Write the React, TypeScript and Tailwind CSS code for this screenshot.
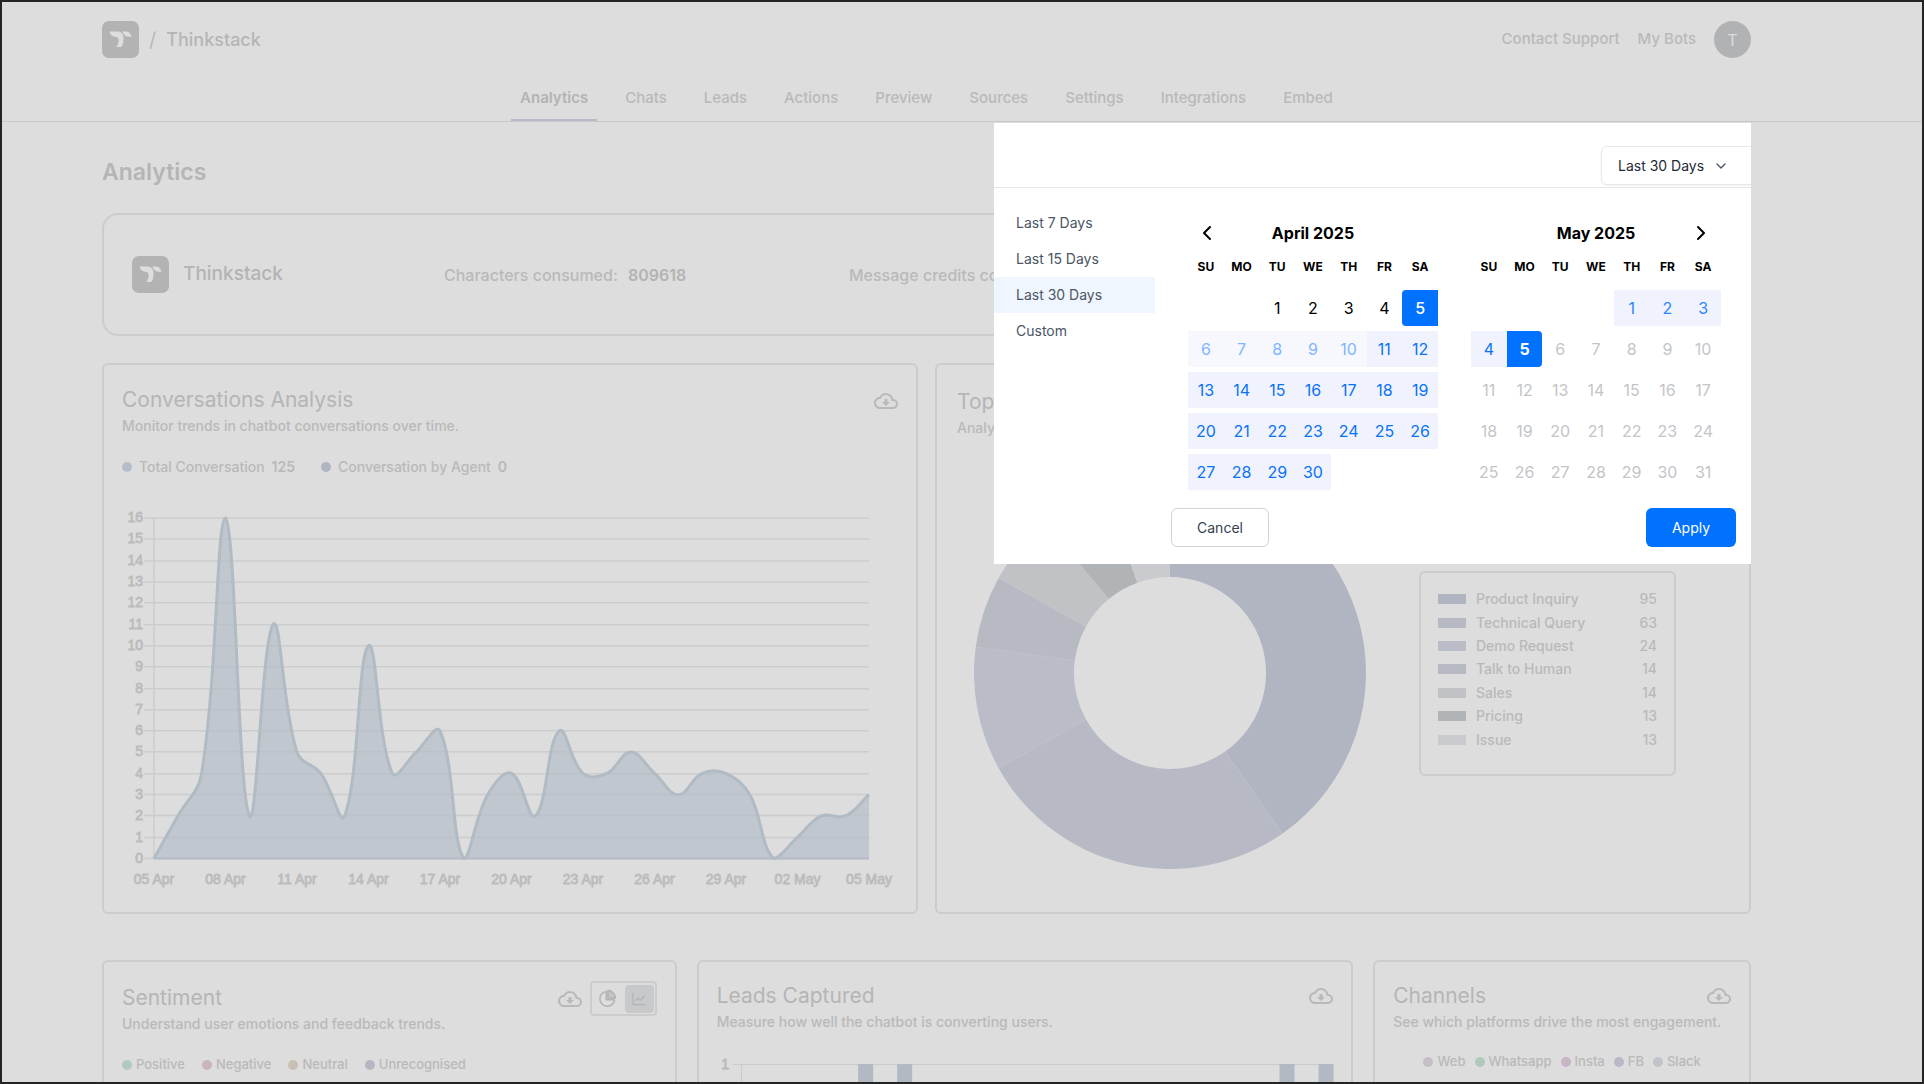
import React from "react";
import { MdOutlineCloudDownload } from "react-icons/md";
import { AiOutlineLineChart } from "react-icons/ai";
import { ChevronDown, ChevronLeft, ChevronRight } from "lucide-react";

const NAV = ["Analytics", "Chats", "Leads", "Actions", "Preview", "Sources", "Settings", "Integrations", "Embed"];
const WEEKDAYS = ["SU", "MO", "TU", "WE", "TH", "FR", "SA"];
const PRESETS = ["Last 7 Days", "Last 15 Days", "Last 30 Days", "Custom"];
const DAILY = [0, 2, 4, 16, 2, 11, 5, 4, 2, 10, 4, 5, 6, 0, 3, 4, 2, 6, 4, 4, 5, 4, 3, 4, 4, 3, 0, 1, 2, 2, 3];
const DATE_LABELS = ["05 Apr", "08 Apr", "11 Apr", "14 Apr", "17 Apr", "20 Apr", "23 Apr", "26 Apr", "29 Apr", "02 May", "05 May"];
const TOPICS = [
  { name: "Product Inquiry", count: 95, color: "#b1b5c1" },
  { name: "Technical Query", count: 63, color: "#b7bac4" },
  { name: "Demo Request", count: 24, color: "#babdc7" },
  { name: "Talk to Human", count: 14, color: "#b7bac2" },
  { name: "Sales", count: 14, color: "#c1c2c6" },
  { name: "Pricing", count: 13, color: "#b0b4b7" },
  { name: "Issue", count: 13, color: "#cacbcf" },
];

function LogoMark() {
  return (
    <svg viewBox="0 0 37 37" className="size-[37px] shrink-0" aria-hidden="true">
      <rect width="37" height="37" rx="7" fill="#b3b3b3" />
      <path
        d="M7.500 10.500H15C19.500 10.500 21.500 13 21.500 17C21.500 20.200 21 23.200 20 25.200Q19.500 26 18.500 26H14.300C16.200 23.500 17 20.500 16.500 18.500C16.200 16.600 15 15.700 13 15.700C10 15.700 8.300 13.500 7.500 10.500Z"
        fill="#dddddd"
      />
      <path d="M20.300 10.500h3.500c2.700 0 4.700 1.700 5.900 5.200h-3.200c-2.900 0-4.900-1.800-6.200-5.200z" fill="#dddddd" />
    </svg>
  );
}

function DownloadButton() {
  return (
    <button type="button" aria-label="Download" className="shrink-0 text-[#b9b9b9]">
      <MdOutlineCloudDownload className="size-6" />
    </button>
  );
}

function CardHeader({ title, subtitle, children }: { title: string; subtitle: string; children?: React.ReactNode }) {
  return (
    <div className="flex items-start justify-between">
      <div className="min-w-0">
        <h2 className="text-[21px] leading-7 font-normal whitespace-nowrap text-[#b5b5b5]">{title}</h2>
        <p className="text-sm leading-6 font-medium whitespace-nowrap text-[#b9b9b9]">{subtitle}</p>
      </div>
      {children}
    </div>
  );
}

function Dot({ className }: { className: string }) {
  return <span className={`size-[10px] shrink-0 rounded-full ${className}`} />;
}

type Point = { x: number; y: number };

const LEFT = 32;
const RIGHT = 748;
const TOP = 12;
const BOTTOM = 353;
const STEP = (BOTTOM - TOP) / 16;

function curve(points: Point[]) {
  const tension = 0.4;
  const clamp = (p: Point) => ({ x: Math.min(RIGHT, Math.max(LEFT, p.x)), y: Math.min(BOTTOM, Math.max(TOP, p.y)) });
  const handles = points.map((cur, i) => {
    const prev = points[i - 1] ?? cur;
    const next = points[i + 1] ?? cur;
    const a = Math.hypot(cur.x - prev.x, cur.y - prev.y);
    const b = Math.hypot(next.x - cur.x, next.y - cur.y);
    const fa = (tension * a) / (a + b);
    const fb = (tension * b) / (a + b);
    return {
      before: clamp({ x: cur.x - fa * (next.x - prev.x), y: cur.y - fa * (next.y - prev.y) }),
      after: clamp({ x: cur.x + fb * (next.x - prev.x), y: cur.y + fb * (next.y - prev.y) }),
    };
  });
  return points
    .map((p, i) => {
      if (i === 0) return `M${p.x} ${p.y}`;
      const c1 = handles[i - 1].after;
      const c2 = handles[i].before;
      return `C${c1.x} ${c1.y} ${c2.x} ${c2.y} ${p.x} ${p.y}`;
    })
    .join("");
}

function ConversationChart() {
  const points = DAILY.map((v, i) => ({ x: LEFT + ((RIGHT - LEFT) * i) / 30, y: BOTTOM - v * STEP }));
  const line = curve(points);
  return (
    <svg viewBox="0 0 777 390" className="mt-[29px] w-full" role="img" aria-label="Conversations per day">
      {Array.from({ length: 17 }, (_, v) => {
        const y = Math.round(BOTTOM - v * STEP);
        return (
          <g key={v}>
            <path d={`M${LEFT - 10} ${y}H${RIGHT}`} stroke="#cccccc" strokeWidth="1.5" />
            <text x={LEFT - 11} y={y + 4} textAnchor="end" fontSize="14" fontFamily="Liberation Sans, sans-serif" fill="#bcbcbc" stroke="#bcbcbc" strokeWidth="0.8">
              {v}
            </text>
          </g>
        );
      })}
      <path d={`M${LEFT} ${TOP}V${BOTTOM}`} stroke="#cccccc" strokeWidth="1.5" />
      <path d={`${line}V${BOTTOM}H${LEFT}Z`} fill="#b4bec8" fillOpacity="0.72" />
      <path d={`M${LEFT} ${BOTTOM}H${RIGHT}`} stroke="#b4bbc5" strokeWidth="2" />
      <path d={line} fill="none" stroke="#b1bbc4" strokeWidth="3" />
      {DATE_LABELS.map((label, i) => (
        <text key={label} x={LEFT + ((RIGHT - LEFT) * i) / 10} y="379" textAnchor="middle" fontSize="14" fontFamily="Liberation Sans, sans-serif" fill="#bcbcbc" stroke="#bcbcbc" strokeWidth="0.8">
          {label}
        </text>
      ))}
    </svg>
  );
}

function TopicsDonut() {
  const total = TOPICS.reduce((sum, t) => sum + t.count, 0);
  const at = (r: number, turn: number) => {
    const a = turn * 2 * Math.PI;
    return `${196 + r * Math.sin(a)} ${196 - r * Math.cos(a)}`;
  };
  let start = 0;
  return (
    <svg viewBox="0 0 392 392" className="w-[392px] shrink-0" role="img" aria-label="Topics share">
      {TOPICS.map((t) => {
        const from = start / total;
        start += t.count;
        const to = start / total;
        return <path key={t.name} fill={t.color} d={`M${at(196, from)}A196 196 0 0 1 ${at(196, to)}L${at(96, to)}A96 96 0 0 0 ${at(96, from)}Z`} />;
      })}
    </svg>
  );
}

function dayClass(month: string, day: number) {
  if (month === "April 2025") {
    if (day < 5) return "text-black";
    if (day === 5) return "rounded-l-[4px] bg-[#0072ff] font-medium text-white";
    if (day <= 10) return "bg-[#f7f8fe] text-[#80b5ff]";
    return "bg-[#f0f3fe] text-[#0a72f5]";
  }
  if (day < 4) return "bg-[#f0f3fe] text-[#2f86fa]";
  if (day === 4) return "bg-[#f0f3fe] text-[#0a72f5]";
  if (day === 5) return "rounded-r-[4px] bg-[#0072ff] font-bold text-white";
  return "text-[#c3c5c8]";
}

function Month({ title, offset, days, nav }: { title: string; offset: number; days: number; nav: "prev" | "next" }) {
  const cells = [...Array(offset).fill(0), ...Array.from({ length: days }, (_, i) => i + 1)];
  while (cells.length < 35) cells.push(0);
  return (
    <div className="w-[250px]">
      <div className="grid h-9 grid-cols-7 items-center">
        {nav === "prev" && (
          <button type="button" aria-label="Previous month" className="col-start-1 row-start-1 flex justify-center pl-0.5">
            <ChevronLeft className="size-6 text-black" />
          </button>
        )}
        <h3 className="col-span-5 col-start-2 row-start-1 text-center text-base font-bold text-black">{title}</h3>
        {nav === "next" && (
          <button type="button" aria-label="Next month" className="col-start-7 row-start-1 flex justify-center pr-1">
            <ChevronRight className="size-6 text-black" />
          </button>
        )}
      </div>
      <table className="w-full table-fixed border-collapse">
        <thead>
          <tr className="h-[34px]">
            {WEEKDAYS.map((d) => (
              <th key={d} className="p-0 pb-[3px] text-center text-xs font-bold text-black">
                {d}
              </th>
            ))}
          </tr>
        </thead>
        <tbody>
          {[0, 1, 2, 3, 4].map((w) => (
            <tr key={w}>
              {cells.slice(w * 7, w * 7 + 7).map((day, i) => (
                <td key={i} className="p-0 pt-[5px]">
                  {day > 0 && (
                    <button type="button" className={`block h-9 w-full text-center text-base ${dayClass(title, day)}`}>
                      {day}
                    </button>
                  )}
                </td>
              ))}
            </tr>
          ))}
        </tbody>
      </table>
    </div>
  );
}

function DateRangePopup() {
  return (
    <section aria-label="Date range" className="absolute top-px right-0 w-[757px] overflow-hidden bg-white">
      <div className="flex h-[65px] items-end justify-end border-b border-[#e5e7eb] pb-[2px]">
        <button type="button" className="-mr-1 flex h-[39px] w-[154px] items-center gap-[9px] rounded-md border border-[#e5e7eb] pl-4 text-sm text-[#1f2937] shadow-xs">
          Last 30 Days
          <ChevronDown className="size-4 text-[#4b5563]" />
        </button>
      </div>
      <div className="flex">
        <ul className="w-[161px] pt-[17px]">
          {PRESETS.map((p) => (
            <li key={p}>
              <button
                type="button"
                className={`block h-9 w-full pl-[22px] text-left text-sm text-[#4b5563] ${p === "Last 30 Days" ? "bg-[#eff6ff]" : ""}`}
              >
                {p}
              </button>
            </li>
          ))}
        </ul>
        <div className="flex-1 pt-[27px] pr-[15px] pb-[17px] pl-4">
          <div className="flex gap-[33px] pl-[17px]">
            <Month title="April 2025" offset={2} days={30} nav="prev" />
            <Month title="May 2025" offset={4} days={31} nav="next" />
          </div>
          <div className="mt-[18px] flex justify-between">
            <button type="button" className="h-[39px] w-[98px] rounded-md border border-[#d1d5db] text-sm text-[#374151]">
              Cancel
            </button>
            <button type="button" className="h-[39px] w-[90px] rounded-md bg-[#0072ff] text-sm text-white">
              Apply
            </button>
          </div>
        </div>
      </div>
    </section>
  );
}

function LeadsChart() {
  return (
    <svg viewBox="0 0 616 120" className="mt-[22px] w-full overflow-visible" role="img" aria-label="Leads captured per day">
      <path d="M15.500 8.500H616" stroke="#cacaca" />
      <path d="M24.500 8.500V120" stroke="#cacaca" />
      <text x="12" y="13" textAnchor="end" fontSize="14" fontFamily="Liberation Sans, sans-serif" fill="#b9b9b9" stroke="#b9b9b9" strokeWidth="0.8">
        1
      </text>
      {[141, 180, 562, 601].map((x) => (
        <rect key={x} x={x} y="8" width="15" height="112" fill="#b1bac3" />
      ))}
    </svg>
  );
}

export default function App() {
  return (
    <div className="h-screen overflow-hidden border-2 border-[#242424] bg-[#dddddd] font-['Inter',sans-serif] text-[#b9b9b9]">
      <header className="border-b border-[#c8c8c8] pr-[171px] pl-[100px]">
        <div className="flex items-center justify-between pt-[19px]">
          <div className="flex items-center">
            <LogoMark />
            <span className="ml-[10px] text-xl">/</span>
            <span className="ml-[10px] text-lg font-medium text-[#b5b5b5]">Thinkstack</span>
          </div>
          <div className="flex items-center gap-[18px] text-[15px] font-medium">
            <a href="#support">Contact Support</a>
            <a href="#bots">My Bots</a>
            <span className="flex size-[37px] items-center justify-center rounded-full bg-[#b1b2b4] text-base font-normal text-[#dddddd]">T</span>
          </div>
        </div>
        <nav className="mt-[18px] flex justify-center gap-[19px]">
          {NAV.map((item, i) => (
            <a
              key={item}
              href={`#${item.toLowerCase()}`}
              className={`flex h-[45px] items-center border-b-2 px-[9px] pt-0.5 text-[15px] ${
                i === 0 ? "border-[#b5bcc6] font-semibold text-[#b3b3b3]" : "border-transparent font-medium"
              }`}
            >
              {item}
            </a>
          ))}
        </nav>
      </header>

      <main className="relative mr-[171px] ml-[100px]">
        <h1 className="pt-8 text-[23px] leading-9 font-semibold text-[#b5b5b5]">Analytics</h1>

        <section className="mt-[23px] flex h-[123px] items-center rounded-2xl border-2 border-[#cccccc] px-7">
          <LogoMark />
          <span className="ml-[14px] w-[261px] text-[19px] font-medium text-[#b3b3b3]">Thinkstack</span>
          <p className="w-[405px] text-base font-medium">
            Characters consumed: <span className="ml-[6px] font-semibold text-[#b3b3b3]">809618</span>
          </p>
          <p className="text-base font-medium">
            Message credits consumed: <span className="ml-[6px] font-semibold text-[#b3b3b3]">125</span>
          </p>
        </section>

        <div className="mt-[27px] grid grid-cols-2 gap-[17px]">
          <section className="rounded-md border-2 border-[#cccccc] px-[18px] pt-[21px] pb-[17px]">
            <CardHeader title="Conversations Analysis" subtitle="Monitor trends in chatbot conversations over time.">
              <div className="flex pt-[3px]">
                <DownloadButton />
              </div>
            </CardHeader>
            <ul className="mt-[19px] flex gap-[26px] text-sm font-medium">
              <li className="flex items-center gap-[7px]">
                <Dot className="bg-[#b4bec8]" />
                Total Conversation <span className="font-semibold">125</span>
              </li>
              <li className="flex items-center gap-[7px]">
                <Dot className="bg-[#b0b5c4]" />
                Conversation by Agent <span className="font-semibold">0</span>
              </li>
            </ul>
            <ConversationChart />
          </section>

          <section className="flex flex-col rounded-md border-2 border-[#cccccc] px-5 pt-[23px]">
            <CardHeader title="Top Queries" subtitle="Analyze the most common topics.">
              <DownloadButton />
            </CardHeader>
            <div className="mt-[37px] flex items-center gap-[53px] pl-[17px]">
              <TopicsDonut />
              <ul className="grid h-[205px] w-[257px] grid-rows-7 rounded-md border-2 border-[#cccccc] pt-[15px] pr-[17px] pb-[22px] pl-[17px] text-sm font-medium">
                {TOPICS.map((t) => (
                  <li key={t.name} className="flex items-center">
                    <span className="h-[10px] w-7" style={{ backgroundColor: t.color }} />
                    <span className="ml-[10px] flex-1">{t.name}</span>
                    <span>{t.count}</span>
                  </li>
                ))}
              </ul>
            </div>
          </section>
        </div>

        <div className="mt-[46px] grid grid-cols-[minmax(0,575fr)_minmax(0,657fr)_minmax(0,378fr)] gap-5">
          <section className="rounded-t-md border-2 border-b-0 border-[#cccccc] px-[18px] pt-[19px]">
            <div className="flex items-start justify-between">
              <div className="pt-[3px]">
                <CardHeader title="Sentiment" subtitle="Understand user emotions and feedback trends." />
              </div>
              <div className="flex items-center gap-2">
                <DownloadButton />
                <div className="flex h-[35px] items-center gap-[3px] rounded border-2 border-[#cccccc] px-px">
                  <button type="button" aria-label="Pie view" className="flex size-[29px] items-center justify-center">
                    <svg viewBox="0 0 20 20" className="size-[19px]" fill="none" stroke="#b3b3b3" strokeWidth="1.600">
                      <path d="M8.800 2.600a7.800 7.800 0 1 0 8.700 9" />
                      <path d="M10.500 1.600a7.800 7.800 0 0 1 7.800 7.800h-7.800z" fill="#c4c4c4" />
                      <path d="M8.800 2.600v8.700h8.700" />
                    </svg>
                  </button>
                  <button type="button" aria-label="Line view" className="flex h-[28px] w-[29px] items-center justify-center rounded bg-[#c8c9cb] text-[#b1b3bd]">
                    <AiOutlineLineChart className="size-[18px]" />
                  </button>
                </div>
              </div>
            </div>
            <ul className="mt-[19px] flex gap-[17px] text-[13px] font-medium">
              <li className="flex items-center gap-1"><Dot className="bg-[#afcbbd]" />Positive</li>
              <li className="flex items-center gap-1"><Dot className="bg-[#c8b6b8]" />Negative</li>
              <li className="flex items-center gap-1"><Dot className="bg-[#c9c0b3]" />Neutral</li>
              <li className="flex items-center gap-1"><Dot className="bg-[#b9b3c3]" />Unrecognised</li>
            </ul>
          </section>

          <section className="rounded-t-md border-2 border-b-0 border-[#cccccc] px-[18px] pt-5">
            <CardHeader title="Leads Captured" subtitle="Measure how well the chatbot is converting users.">
              <div className="flex pt-[2px]">
                <DownloadButton />
              </div>
            </CardHeader>
            <LeadsChart />
          </section>

          <section className="rounded-t-md border-2 border-b-0 border-[#cccccc] px-[18px] pt-5">
            <CardHeader title="Channels" subtitle="See which platforms drive the most engagement.">
              <div className="flex pt-[2px]">
                <DownloadButton />
              </div>
            </CardHeader>
            <ul className="mt-[18px] flex justify-center gap-[9px] text-[13px] font-medium">
              <li className="flex items-center gap-1"><Dot className="bg-[#c6bdc7]" />Web</li>
              <li className="flex items-center gap-1"><Dot className="bg-[#afcab9]" />Whatsapp</li>
              <li className="flex items-center gap-1"><Dot className="bg-[#c5b5c6]" />Insta</li>
              <li className="flex items-center gap-1"><Dot className="bg-[#b8b8c6]" />FB</li>
              <li className="flex items-center gap-1"><Dot className="bg-[#bfc4cb]" />Slack</li>
            </ul>
          </section>
        </div>

        <DateRangePopup />
      </main>
    </div>
  );
}
